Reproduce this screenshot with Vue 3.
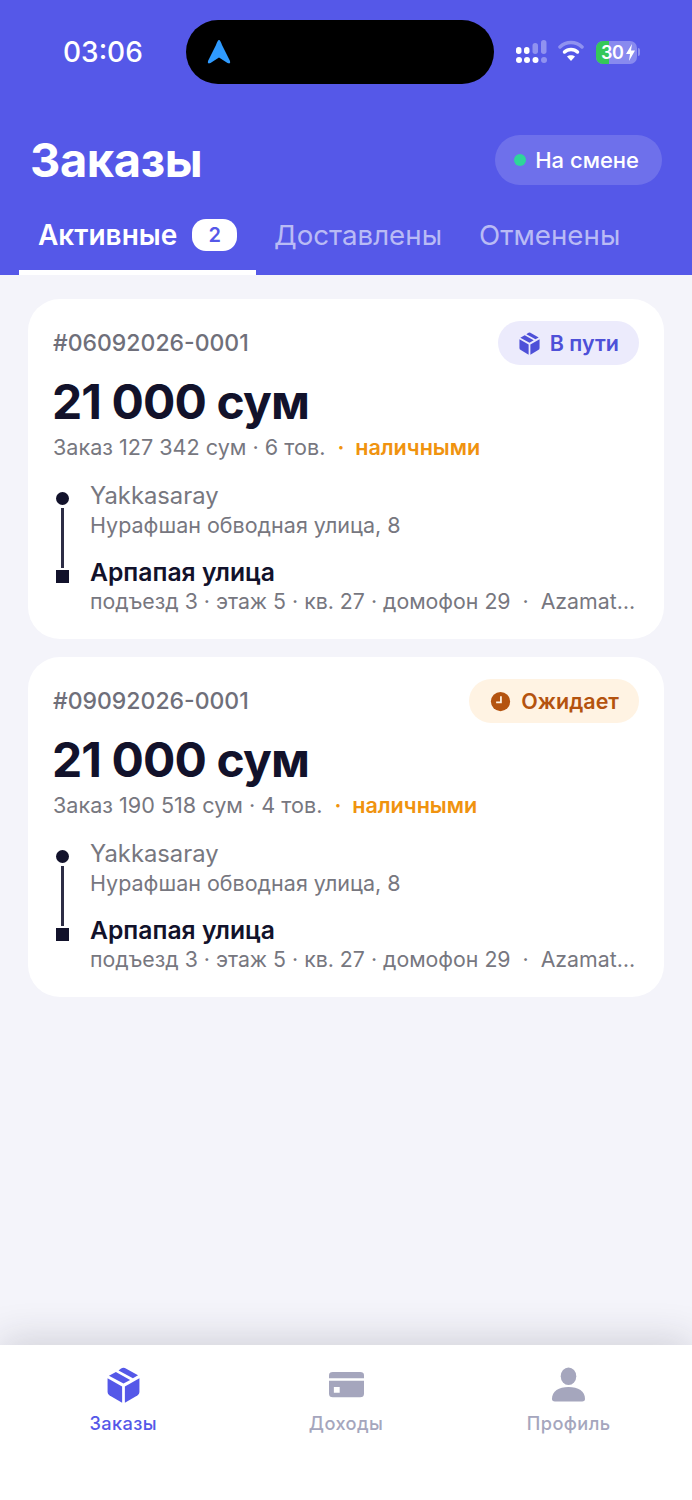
<template>
  <div class="screen">
    <header class="head">
      <div class="status">
        <span class="time">03:06</span>
        <div class="island">
          <svg class="island__arrow" viewBox="0 0 24 26"><path d="M12 1 C13 1 14 3 15 6 L23 22 Q24 25.500 20.500 24 L12 18.500 L3.500 24 Q0 25.500 1 22 L9 6 C10 3 11 1 12 1 Z" fill="#2f9bff" /></svg>
        </div>
        <div class="sys">
          <svg class="sys__signal" width="32" height="24" viewBox="0 0 32 24">
            <g fill="#fff">
              <rect x="0" y="7" width="5.500" height="7" rx="2.700" />
              <rect x="8" y="7" width="5.500" height="7" rx="2.700" />
              <circle cx="3" cy="20" r="3" />
              <circle cx="11" cy="20" r="3" />
              <circle cx="19.500" cy="20" r="3" />
            </g>
            <g fill="#fff" fill-opacity=".35">
              <rect x="16.500" y="3" width="5.500" height="11" rx="2.700" />
              <rect x="25" y="0" width="5.500" height="14" rx="2.700" />
              <circle cx="28" cy="20" r="3" />
            </g>
          </svg>
          <svg class="sys__wifi" width="26" height="22" viewBox="0 0 26 22">
            <path d="M2 7 C8 1 18 1 24 7" fill="none" stroke="#fff" stroke-opacity=".35" stroke-width="3.500" stroke-linecap="round" />
            <path d="M6.500 12 C10 8.500 16 8.500 19.500 12" fill="none" stroke="#fff" stroke-width="3.500" stroke-linecap="round" />
            <path d="M13 21 L9 16.500 C11 14.800 15 14.800 17 16.500 Z" fill="#fff" />
          </svg>
          <div class="battery">
            <div class="battery__fill"></div>
            <span class="battery__num">30</span>
            <svg class="battery__bolt" width="11" height="17" viewBox="0 0 11 17"><path d="M7 0 L1 10 H5 L4 17 L10 6.500 H6 Z" fill="#fff" /></svg>
          </div>
          <div class="battery__cap"></div>
        </div>
      </div>

      <div class="title-row">
        <h1 class="title">Заказы</h1>
        <div class="shift"><i class="shift__dot"></i>На смене</div>
      </div>

      <nav class="tabs">
        <div class="tab tab--on">Активные<span class="tab__count">2</span></div>
        <div class="tab">Доставлены</div>
        <div class="tab">Отменены</div>
      </nav>
    </header>

    <main class="list">
      <article v-for="o in orders" :key="o.id" class="card">
        <div class="card__top">
          <span class="card__id">{{ o.id }}</span>
          <span class="badge" :class="'badge--' + o.kind">
            <svg v-if="o.kind === 'way'" class="badge__ico" viewBox="0 0 24 26"><path :d="boxTop" /><path :d="boxLeft" /><path :d="boxRight" /></svg>
            <svg v-else class="badge__ico" viewBox="0 0 24 24"><circle cx="12" cy="12" r="11" /><path d="M12.500 6 V13 H7" fill="none" stroke="#fff3e3" stroke-width="2" /></svg>
            {{ o.status }}
          </span>
        </div>
        <div class="card__sum">21 000 сум</div>
        <div class="card__meta">
          <span>Заказ {{ o.total }} сум · {{ o.items }} тов.</span>
          <span class="card__cash">·&nbsp; наличными</span>
        </div>
        <div class="route">
          <div class="route__rail">
            <i class="route__dot"></i>
            <i class="route__line"></i>
            <i class="route__end"></i>
          </div>
          <div class="route__text">
            <div class="route__from">Yakkasaray</div>
            <div class="route__sub">Нурафшан обводная улица, 8</div>
            <div class="route__to">Арпапая улица</div>
            <div class="route__sub route__sub--one">подъезд 3 · этаж 5 · кв. 27 · домофон 29 &nbsp;·&nbsp; Azamat…</div>
          </div>
        </div>
      </article>
    </main>

    <footer class="bar">
      <div class="bar__item bar__item--on">
        <svg class="bar__ico" viewBox="0 0 24 26"><path :d="boxTop" /><path :d="boxLeft" /><path :d="boxRight" /></svg>
        <span>Заказы</span>
      </div>
      <div class="bar__item">
        <svg class="bar__ico" viewBox="0 0 36 36">
          <path d="M0 8 Q0 4.700 4 4.700 H32 Q36 4.700 36 8 V11 H0 Z" />
          <path fill-rule="evenodd" d="M0 13.700 H36 V27 Q36 30.700 32 30.700 H4 Q0 30.700 0 27 Z M5 20 V26 H11 V20 Z" />
        </svg>
        <span>Доходы</span>
      </div>
      <div class="bar__item">
        <svg class="bar__ico" viewBox="0 0 36 36">
          <ellipse cx="18" cy="9" rx="8" ry="9" />
          <path d="M1 32.500 C1 24 8 20 18 20 C28 20 35 24 35 32.500 Q35 35 32 35 H4 Q1 35 1 32.500 Z" />
        </svg>
        <span>Профиль</span>
      </div>
    </footer>
  </div>
</template>

<script setup>
// коробка: верхняя грань разрезана полосой скотча
const boxTop = 'M12 0.500 Q13 0.500 14 1.200 L22.500 6 L18.800 8.200 L8.400 2.500 L10 1.200 Q11 0.500 12 0.500 Z M6.500 3.700 L16.800 9.400 L12 12 L1.500 6.300 Z'
const boxLeft = 'M0.500 8.200 L11 14 V25.800 L2 20.500 Q0.500 19.600 0.500 18 Z'
const boxRight = 'M23.500 8.200 L13 14 V25.800 L22 20.500 Q23.500 19.600 23.500 18 Z'

const orders = [
  { id: '#06092026-0001', status: 'В пути', kind: 'way', total: '127 342', items: 6 },
  { id: '#09092026-0001', status: 'Ожидает', kind: 'wait', total: '190 518', items: 4 }
]
</script>

<style>
body { margin: 0; background: #f4f4fa; }
</style>

<style scoped>
.screen {
  width: 692px;
  height: 1500px;
  display: flex;
  flex-direction: column;
  overflow: hidden;
  background: #f4f4fa;
  font-family: Inter, "Noto Sans", sans-serif;
  color: #12122b;
}

.head {
  height: 275px;
  box-sizing: border-box;
  padding-top: 20px;
  background: #5558e8;
  color: #fff;
}

.status {
  display: flex;
  align-items: center;
  height: 64px;
  padding-left: 63px;
}
.time {
  width: 123px;
  font-size: 28px;
  font-weight: 500;
  line-height: 64px;
}
.island {
  width: 308px;
  height: 64px;
  display: flex;
  align-items: center;
  padding-left: 21px;
  box-sizing: border-box;
  border-radius: 32px;
  background: #000;
}
.island__arrow { width: 24px; height: 26px; }

.sys {
  display: flex;
  align-items: center;
  margin-left: 22px;
}
.sys__signal { margin-right: 10px; }
.sys__wifi { margin-right: 12px; margin-top: -2px; }
.battery {
  position: relative;
  width: 41px;
  height: 23px;
  display: flex;
  align-items: center;
  padding-left: 5px;
  box-sizing: border-box;
  border-radius: 7px;
  overflow: hidden;
  background: rgba(255, 255, 255, .3);
}
.battery__fill {
  position: absolute;
  left: 0;
  top: 0;
  width: 13px;
  height: 100%;
  background: #35c759;
}
.battery__num {
  position: relative;
  font-size: 18px;
  font-weight: 600;
  line-height: 23px;
  letter-spacing: -.5px;
}
.battery__bolt { position: relative; margin-left: 2px; }
.battery__cap {
  width: 2px;
  height: 8px;
  margin-left: 1px;
  border-radius: 0 2px 2px 0;
  background: rgba(255, 255, 255, .35);
}

.title-row {
  display: flex;
  align-items: center;
  justify-content: space-between;
  padding: 51px 30px 0 30px;
}
.title {
  margin: 0;
  font-size: 47px;
  font-weight: 700;
  line-height: 50px;
  letter-spacing: -.4px;
}
.shift {
  display: flex;
  align-items: center;
  gap: 9px;
  height: 50px;
  padding: 0 23px 0 19px;
  border-radius: 25px;
  background: rgba(255, 255, 255, .15);
  font-size: 22px;
  font-weight: 500;
}
.shift__dot {
  width: 12px;
  height: 12px;
  border-radius: 50%;
  background: #2ed69a;
}

.tabs {
  display: flex;
  margin-top: 25px;
  padding-left: 19px;
}
.tab {
  height: 65px;
  box-sizing: border-box;
  display: flex;
  align-items: center;
  padding: 0 18px 10px;
  border-bottom: 5px solid transparent;
  font-size: 27.700px;
  color: rgba(255, 255, 255, .6);
}
.tab:last-child { margin-left: 1px; }
.tab--on {
  width: 237px;
  padding-left: 19px;
  color: #fff;
  font-size: 28px;
  font-weight: 600;
  border-bottom-color: #fff;
}
.tab__count {
  width: 45px;
  height: 32px;
  margin-left: 15px;
  border-radius: 14px;
  background: #fff;
  color: #5558e8;
  font-size: 20px;
  line-height: 32px;
  text-align: center;
}

.list {
  flex: 1;
  display: flex;
  flex-direction: column;
  gap: 18px;
  padding: 24px 28px 0;
}

.card {
  height: 340px;
  box-sizing: border-box;
  padding: 22px 25px 0;
  border-radius: 32px;
  background: #fff;
}
.card__top {
  display: flex;
  align-items: center;
  justify-content: space-between;
  height: 44px;
}
.card__id {
  font-size: 23px;
  font-weight: 500;
  color: #6f6f7a;
}
.badge {
  display: flex;
  align-items: center;
  gap: 10px;
  height: 44px;
  padding: 0 20px 0 21px;
  border-radius: 22px;
  font-size: 21.500px;
  font-weight: 600;
}
.badge--way { background: #ecebfc; color: #4e50d8; fill: #4e50d8; }
.badge--wait { background: #fff3e3; color: #b4530f; fill: #b4530f; }
.badge__ico { width: 21px; height: 23px; }

.card__sum {
  margin-top: 8px;
  margin-left: -1px;
  font-size: 48px;
  font-weight: 700;
  line-height: 58px;
  letter-spacing: -.9px;
}
.card__meta {
  display: flex;
  gap: 12px;
  margin-top: 1px;
  font-size: 21.600px;
  line-height: 30px;
  color: #77777f;
}
.card__cash { color: #f0930f; font-weight: 600; }

.route {
  display: flex;
  gap: 19px;
  margin-top: 19px;
}
.route__rail {
  width: 18px;
  display: flex;
  flex-direction: column;
  align-items: center;
  padding-top: 11px;
  flex: none;
}
.route__dot { width: 13px; height: 13px; border-radius: 50%; background: #12122b; }
.route__line { width: 3px; height: 60px; margin: 3px 0 2px; background: #2d2d45; }
.route__end { width: 13px; height: 13px; background: #12122b; }
.route__text { min-width: 0; flex: 1; }
.route__from { font-size: 23.800px; line-height: 30px; color: #77777f; }
.route__to { margin-top: 17px; font-size: 24.700px; line-height: 30px; font-weight: 600; }
.route__sub {
  font-size: 21.500px;
  line-height: 29px;
  color: #77777f;
}
.route__sub--one { font-size: 21.300px; white-space: nowrap; }

.bar {
  position: relative;
  height: 155px;
  display: flex;
  padding: 0 12px;
  background: #fff;
  box-shadow: 0 -6px 36px rgba(30, 30, 50, .16);
}
.bar__item {
  flex: 1;
  display: flex;
  flex-direction: column;
  align-items: center;
  padding-top: 22px;
  font-size: 18.200px;
  font-weight: 500;
  line-height: 24px;
  letter-spacing: .4px;
  color: #a5a6bd;
  fill: #a5a6bd;
}
.bar__item--on { color: #5558e8; fill: #5558e8; }
.bar__ico { width: 35px; height: 36px; margin-bottom: 8px; }
</style>
